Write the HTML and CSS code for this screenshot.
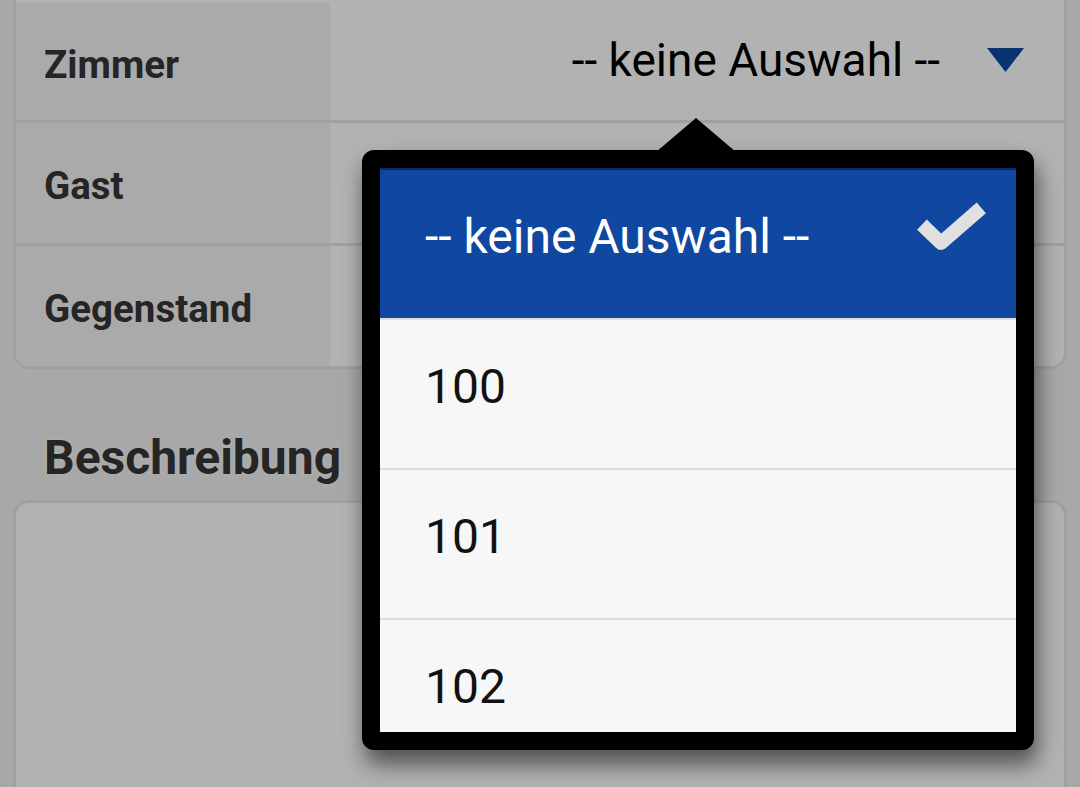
FILE: index.html
```html
<!DOCTYPE html>
<html>
<head>
	<title>Meldung</title>
	<meta name="viewport" content="width=device-width, initial-scale=1" />
	<link rel="stylesheet" href="styles.css">
</head>
<body>
	<div class="page">
		<div class="panel">
			<div class="row">
				<div class="label">Zimmer</div>
				<div class="value">
					<span>-- keine Auswahl --</span>
					<svg class="caret" width="37" height="24" viewBox="0 0 37 24"><polygon points="0,0 37,0 18.5,24" fill="#0f47a1"/></svg>
				</div>
			</div>
			<div class="row">
				<div class="label">Gast</div>
				<div class="value"></div>
			</div>
			<div class="row">
				<div class="label">Gegenstand</div>
				<div class="value"></div>
			</div>
		</div>

		<h2 class="section-title">Beschreibung</h2>
		<div class="textbox"></div>
	</div>

	<div class="overlay"></div>

	<div class="picker">
		<div class="picker-arrow"></div>
		<div class="options">
			<div class="option selected">
				<span>-- keine Auswahl --</span>
				<svg class="check" width="100" height="70" viewBox="0 0 100 70"><polyline points="27,37.5 41,51 76,20.5" fill="none" stroke="#e0e0e0" stroke-width="14" stroke-linecap="square" stroke-linejoin="round"/></svg>
			</div>
			<div class="option"><span>100</span></div>
			<div class="option"><span>101</span></div>
			<div class="option"><span>102</span></div>
		</div>
	</div>
</body>
</html>
```

FILE: styles.css
```css
html, body {
	height: 100%;
}

body {
	margin: 0;
	background-color: #f1f1f1;
	font-family: Roboto, "Noto Sans", sans-serif;
	color: #333;
	overflow: hidden;
}

.page {
	padding: 0 13px;
}

.panel {
	margin-top: -3px;
	background-color: #fff;
	border: 3px solid #e5e5e5;
	border-radius: 0 0 16px 16px;
	overflow: hidden;
}

.row {
	display: flex;
	height: 120px;
}

.row + .row {
	border-top: 3px solid #e5e5e5;
}

.row:first-child .label {
	margin-top: 3px;
}

.label {
	width: 286px;
	padding: 5px 0 0 28px;
	background-color: #f4f4f4;
	display: flex;
	align-items: center;
	font-size: 38.5px;
	font-weight: 700;
	color: #363636;
}

.value {
	flex: 1;
	display: flex;
	align-items: center;
	justify-content: flex-end;
	gap: 47px;
	padding-right: 40px;
	font-size: 46px;
	color: #000;
}

.caret {
	display: block;
}

.section-title {
	margin: 60px 0 14px;
	padding-left: 31px;
	font-size: 48px;
	font-weight: 700;
	line-height: normal;
	color: #363636;
	text-shadow: 0 0 4px rgba(255, 255, 255, 0.9);
}

.textbox {
	height: 320px;
	background-color: #fff;
	border: 3px solid #e5e5e5;
	border-radius: 16px;
}

.overlay {
	position: fixed;
	top: 0;
	left: 0;
	right: 0;
	bottom: 0;
	background-color: rgba(0, 0, 0, 0.3);
}

.picker {
	position: absolute;
	left: 362px;
	top: 150px;
	width: 636px;
	height: 564px;
	border: 18px solid #000;
	border-radius: 12px;
	background-color: #000;
	box-shadow: 3px 14px 22px rgba(0, 0, 0, 0.55);
}

.picker-arrow {
	position: absolute;
	left: 276px;
	top: -50px;
	width: 80px;
	height: 34px;
	background-color: #000;
	clip-path: polygon(50% 0, 100% 100%, 0 100%);
}

.options {
	height: 100%;
	overflow: hidden;
	background-color: #f7f7f7;
}

.option {
	display: flex;
	align-items: center;
	height: 150px;
	box-sizing: border-box;
	padding: 0 16px 16px 45px;
	border-bottom: 2px solid #dddddd;
	font-size: 48px;
	color: #111;
}

.option.selected {
	height: 152px;
	border-top: 2px solid #0a2c66;
	background-color: #0f47a1;
	color: #fff;
}

.option.selected .check {
	display: block;
	margin-left: auto;
	margin-top: -19px;
}
```
